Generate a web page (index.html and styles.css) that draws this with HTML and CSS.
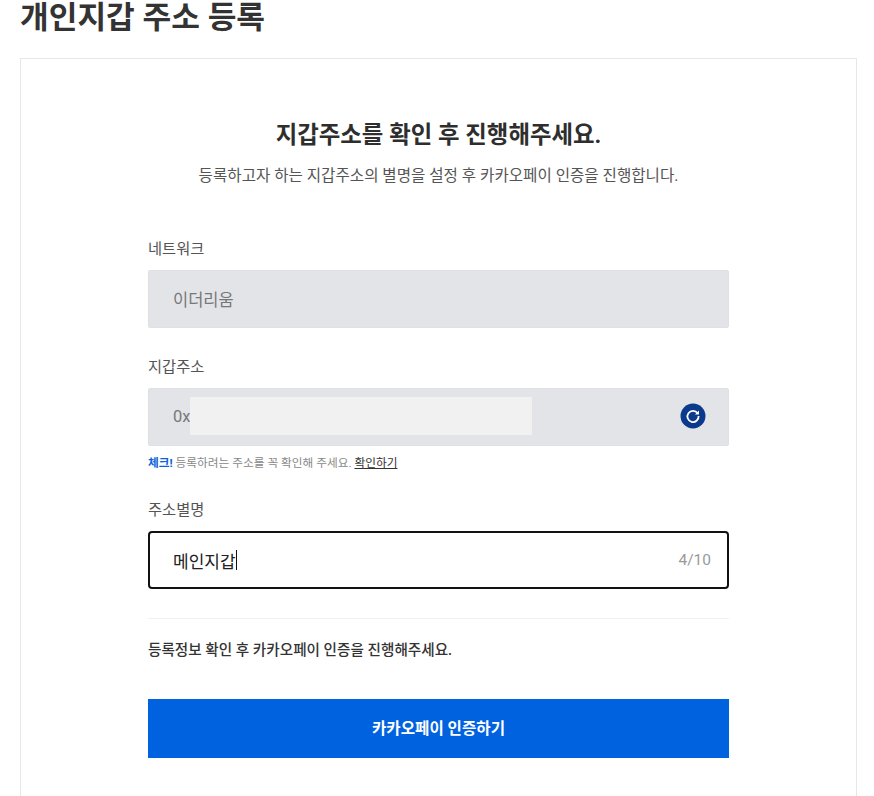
FILE: index.html
```html
<!DOCTYPE html>
<html lang="ko">
<head>
<meta charset="utf-8">
<title>개인지갑 주소 등록</title>
<link rel="stylesheet" href="styles.css">
</head>
<body>
<main class="page">
  <h1 class="page-title">개인지갑 주소 등록</h1>
  <section class="card">
    <h2 class="card-title">지갑주소를 확인 후 진행해주세요.</h2>
    <p class="card-sub">등록하고자 하는 지갑주소의 별명을 설정 후 카카오페이 인증을 진행합니다.</p>
    <div class="form">
      <div class="field">
        <div class="label">네트워크</div>
        <div class="input input-disabled">이더리움</div>
      </div>
      <div class="field field-address">
        <div class="label">지갑주소</div>
        <div class="input input-disabled">
          <span class="addr">0x</span>
          <span class="mask"></span>
          <svg class="refresh" width="26" height="26" viewBox="0 0 26 26" aria-hidden="true">
            <circle cx="13" cy="13" r="12.5" fill="#0b3a8c"/>
            <path d="M17.6 10.2A5.6 5.6 0 1 0 18.6 13" fill="none" stroke="#fff" stroke-width="1.8"/>
            <path d="M19 7.6v4h-4z" fill="#fff"/>
          </svg>
        </div>
        <p class="hint"><strong class="hint-key">체크!</strong> 등록하려는 주소를 꼭 확인해 주세요. <a class="hint-link">확인하기</a></p>
      </div>
      <div class="field field-alias">
        <div class="label">주소별명</div>
        <div class="input input-active">
          <span class="value">메인지갑</span><span class="caret"></span>
          <span class="count">4/10</span>
        </div>
      </div>
      <hr class="divider">
      <p class="notice">등록정보 확인 후 카카오페이 인증을 진행해주세요.</p>
      <button class="submit" type="button">카카오페이 인증하기</button>
    </div>
  </section>
</main>
</body>
</html>
```
FILE: styles.css
```css
* { box-sizing: border-box; }
html, body { margin: 0; padding: 0; height: 100%; overflow: hidden; background: #fff; }
body {
  font-family: Roboto, "Noto Sans CJK KR", "Noto Sans", sans-serif;
  color: #333;
}
.page { padding: 0 17px 0 20px; }
.page-title {
  margin: 0;
  height: 58px;
  font-size: 31.2px;
  line-height: 36px;
  font-weight: 700;
  color: #333;
}
.card {
  border: 1px solid #e5e7ee;
  border-bottom: 0;
  padding: 60px 127px 0;
  height: 738px;
  overflow: hidden;
}
.card-title {
  margin: 0;
  text-align: center;
  font-size: 23.4px;
  line-height: 32px;
  font-weight: 700;
  color: #2e2e2e;
}
.card-sub {
  margin: 14px 0 0;
  text-align: center;
  font-size: 15.6px;
  line-height: 22px;
  color: #555;
}
.form { margin-top: 51px; }
.label {
  font-size: 15.3px;
  line-height: 22px;
  color: #555;
  margin-bottom: 10px;
}
.input {
  height: 58px;
  display: flex;
  align-items: center;
  padding: 0 22px 0 24px;
  font-size: 16.5px;
  border-radius: 2px;
}
.input-disabled {
  background: #e3e4e8;
  border: 1px solid #dfe0e5;
  color: #777;
}
.field-address { margin-top: 28px; }
.addr { width: 17px; white-space: nowrap; flex: none; margin-bottom: 2px; }
.mask {
  width: 342px;
  height: 38px;
  background: #f1f1f1;
  flex: none;
  margin-bottom: 2px;
}
.refresh { margin-left: auto; flex: none; margin-bottom: 2px; }
.hint {
  margin: 7px 0 0;
  font-size: 11.7px;
  line-height: 20px;
  color: #888;
}
.hint-key { color: #0b62dd; font-weight: 700; }
.hint-link { color: #333; text-decoration: underline; }
.field-alias { margin-top: 26px; }
.input-active {
  background: #fff;
  border: 2px solid #111;
  border-radius: 4px;
  color: #222;
  padding-left: 23px;
  padding-right: 16px;
  font-size: 17px;
}
.caret { width: 1px; height: 20px; background: #111; margin-left: 0; }
.count { margin-left: auto; color: #999; font-size: 15.5px; }
.divider {
  border: 0;
  height: 1px;
  background: #f0f0f2;
  margin: 29px 0 0;
}
.notice {
  margin: 20px 0 0;
  font-size: 14.6px;
  line-height: 22px;
  font-weight: 500;
  color: #333;
}
.submit {
  display: block;
  width: 100%;
  height: 59px;
  margin-top: 38px;
  padding: 0 0 3px;
  border: 0;
  background: #0062df;
  color: #fff;
  font-family: inherit;
  font-size: 15.6px;
  font-weight: 700;
}
```
